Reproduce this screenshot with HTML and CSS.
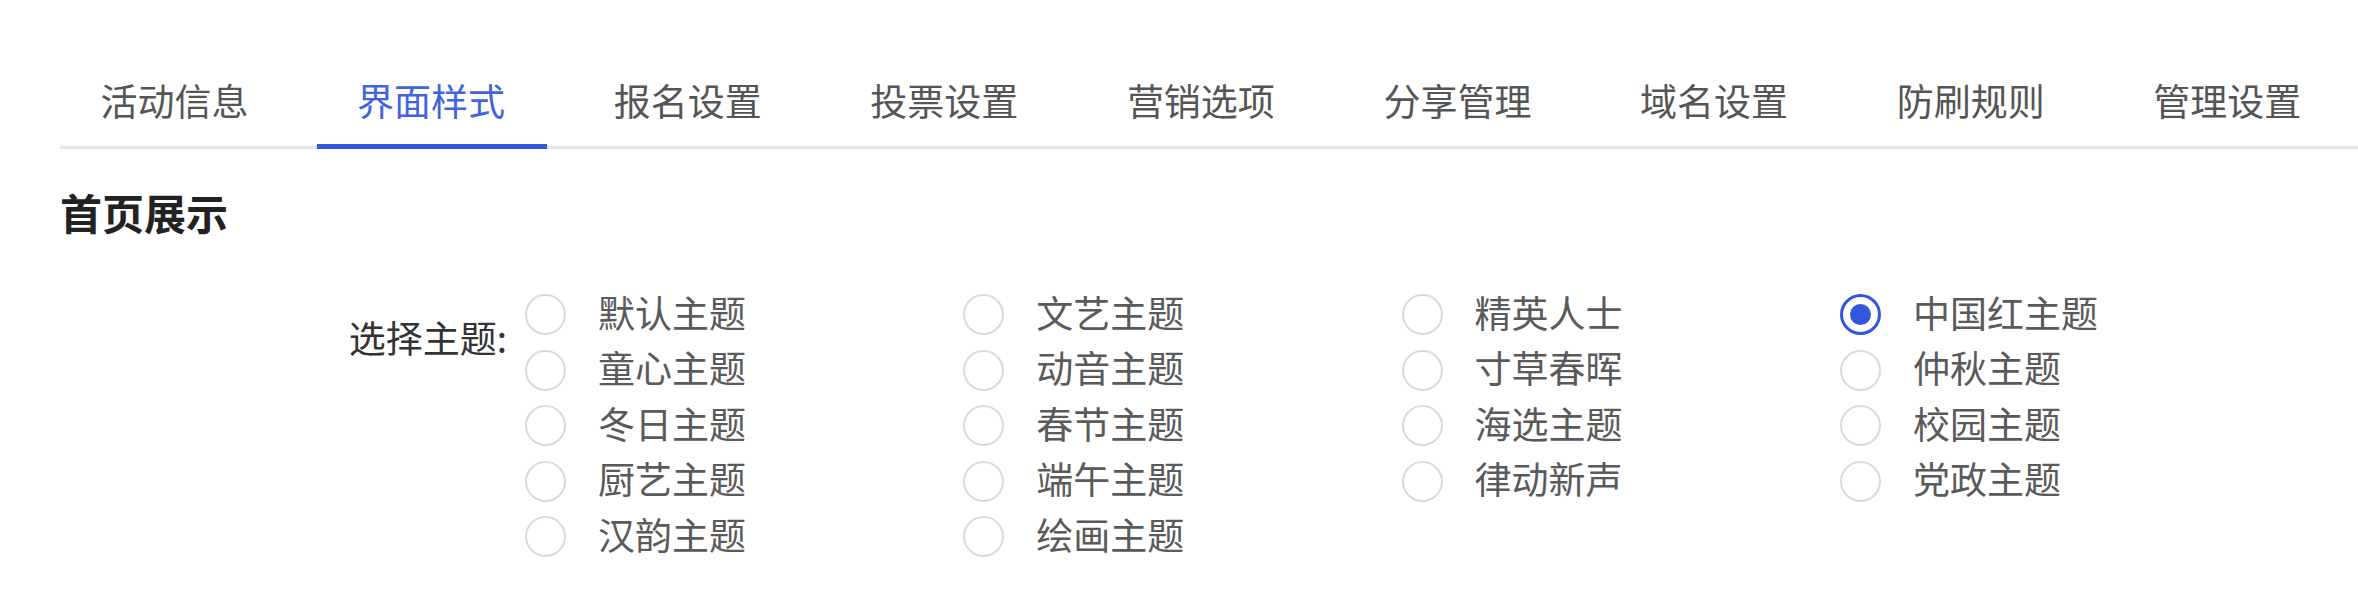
FILE: index.html
```html
<!DOCTYPE html>
<html lang="zh-CN">
<head>
<meta charset="utf-8">
<title>界面样式</title>
<link rel="stylesheet" href="styles.css">
</head>
<body>
<div class="page">
  <nav class="tabs">
    <a class="tab">活动信息</a>
    <a class="tab active">界面样式</a>
    <a class="tab">报名设置</a>
    <a class="tab">投票设置</a>
    <a class="tab">营销选项</a>
    <a class="tab">分享管理</a>
    <a class="tab">域名设置</a>
    <a class="tab">防刷规则</a>
    <a class="tab">管理设置</a>
  </nav>

  <h2 class="section-title">首页展示</h2>

  <div class="form-row">
    <div class="form-label">选择主题:</div>
    <div class="radio-grid">
      <label class="radio"><span class="radio-dot"></span><span class="radio-text">默认主题</span></label>
      <label class="radio"><span class="radio-dot"></span><span class="radio-text">文艺主题</span></label>
      <label class="radio"><span class="radio-dot"></span><span class="radio-text">精英人士</span></label>
      <label class="radio"><span class="radio-dot checked"></span><span class="radio-text">中国红主题</span></label>
      <label class="radio"><span class="radio-dot"></span><span class="radio-text">童心主题</span></label>
      <label class="radio"><span class="radio-dot"></span><span class="radio-text">动音主题</span></label>
      <label class="radio"><span class="radio-dot"></span><span class="radio-text">寸草春晖</span></label>
      <label class="radio"><span class="radio-dot"></span><span class="radio-text">仲秋主题</span></label>
      <label class="radio"><span class="radio-dot"></span><span class="radio-text">冬日主题</span></label>
      <label class="radio"><span class="radio-dot"></span><span class="radio-text">春节主题</span></label>
      <label class="radio"><span class="radio-dot"></span><span class="radio-text">海选主题</span></label>
      <label class="radio"><span class="radio-dot"></span><span class="radio-text">校园主题</span></label>
      <label class="radio"><span class="radio-dot"></span><span class="radio-text">厨艺主题</span></label>
      <label class="radio"><span class="radio-dot"></span><span class="radio-text">端午主题</span></label>
      <label class="radio"><span class="radio-dot"></span><span class="radio-text">律动新声</span></label>
      <label class="radio"><span class="radio-dot"></span><span class="radio-text">党政主题</span></label>
      <label class="radio"><span class="radio-dot"></span><span class="radio-text">汉韵主题</span></label>
      <label class="radio"><span class="radio-dot"></span><span class="radio-text">绘画主题</span></label>
    </div>
  </div>
</div>
</body>
</html>
```

FILE: styles.css
```css
html, body {
  margin: 0;
  padding: 0;
  background: #ffffff;
}

body {
  font-family: "Noto Sans CJK SC", "Noto Sans", sans-serif;
  width: 2358px;
  height: 600px;
  overflow: hidden;
}

.page {
  padding: 72px 0 0 60px;
}

/* Tabs */
.tabs {
  display: flex;
  gap: 26.1px;
  border-bottom: 3px solid #e6e6e6;
}

.tab {
  display: block;
  padding: 0 42px 16px 40.5px;
  font-size: 37px;
  line-height: 56px;
  color: #555555;
  white-space: nowrap;
  border-bottom: 5px solid transparent;
  margin-bottom: -3px;
  cursor: pointer;
}

.tab.active {
  color: #4263e0;
  border-bottom-color: #3356dc;
}

/* Section heading */
.section-title {
  margin: 33px 0 0;
  font-size: 42px;
  line-height: 60px;
  font-weight: 700;
  color: #222222;
}

/* Form row */
.form-row {
  display: flex;
  align-items: flex-start;
  margin-top: 42.75px;
}

.form-label {
  width: 447px;
  flex: none;
  text-align: right;
  padding-top: 24px;
  font-size: 37px;
  line-height: 56px;
  color: #333333;
}

.radio-grid {
  margin-left: 18px;
  display: grid;
  grid-template-columns: repeat(4, 438.3px);
  grid-auto-rows: 55.5px;
}

.radio {
  display: flex;
  align-items: center;
  cursor: pointer;
}

.radio-dot {
  flex: none;
  box-sizing: border-box;
  width: 41px;
  height: 41px;
  margin-top: 4px;
  margin-right: 32px;
  border: 2px solid #dadada;
  border-radius: 50%;
  display: flex;
  align-items: center;
  justify-content: center;
  background: #ffffff;
}

.radio-dot.checked {
  border: 3px solid #3356dc;
}

.radio-dot.checked::after {
  content: "";
  width: 21px;
  height: 21px;
  border-radius: 50%;
  background: #3356dc;
}

.radio-text {
  font-size: 37px;
  line-height: 55.5px;
  color: #5a5a5a;
  white-space: nowrap;
}
```
